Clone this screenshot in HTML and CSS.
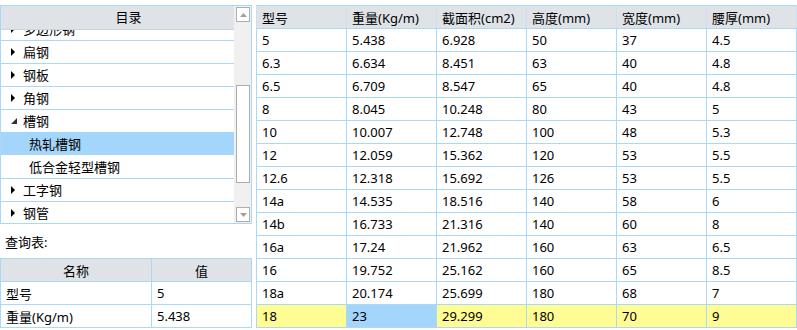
FILE: index.html
```html
<!DOCTYPE html>
<html lang="zh-CN">
<head>
    <meta charset="UTF-8">
    <title>型钢查询</title>
    <link rel="stylesheet" href="styles.css">
</head>
<body>
    <div class="left">
        <div class="tree">
            <div class="tree-main">
                <div class="tree-head">目录</div>
                <div class="tree-view">
                    <div class="tree-list">
                        <div class="node"><div class="row"><svg class="tri" width="8" height="8"><polygon points="0,0 4,4 0,8" fill="#000"/></svg>多边形钢</div></div>
                        <div class="node"><div class="row"><svg class="tri" width="8" height="8"><polygon points="0,0 4,4 0,8" fill="#000"/></svg>扁钢</div></div>
                        <div class="node"><div class="row"><svg class="tri" width="8" height="8"><polygon points="0,0 4,4 0,8" fill="#000"/></svg>钢板</div></div>
                        <div class="node"><div class="row"><svg class="tri" width="8" height="8"><polygon points="0,0 4,4 0,8" fill="#000"/></svg>角钢</div></div>
                        <div class="node">
                            <div class="row"><svg class="tri" width="8" height="8"><polygon points="6,1 6,7 0,7" fill="#333"/></svg>槽钢</div>
                            <div class="row child selected">热轧槽钢</div>
                            <div class="row child">低合金轻型槽钢</div>
                        </div>
                        <div class="node"><div class="row"><svg class="tri" width="8" height="8"><polygon points="0,0 4,4 0,8" fill="#000"/></svg>工字钢</div></div>
                        <div class="node"><div class="row"><svg class="tri" width="8" height="8"><polygon points="0,0 4,4 0,8" fill="#000"/></svg>钢管</div></div>
                    </div>
                </div>
            </div>
            <div class="scrollbar">
                <div class="sb-btn"><svg width="7" height="4"><polygon points="0,4 3.5,0 7,4" fill="#a0a0a0"/></svg></div>
                <div class="sb-track">
                    <div class="sb-thumb"></div>
                </div>
                <div class="sb-btn"><svg width="7" height="4"><polygon points="0,0 7,0 3.5,4" fill="#a0a0a0"/></svg></div>
            </div>
        </div>

        <div class="query-label">查询表:</div>

        <table class="grid query">
            <tr><th class="col-name">名称</th><th>值</th></tr>
            <tr><td>型号</td><td>5</td></tr>
            <tr><td>重量(Kg/m)</td><td>5.438</td></tr>
        </table>
    </div>

    <div class="right">
        <table class="grid data">
            <tr><th>型号</th><th>重量(Kg/m)</th><th>截面积(cm2)</th><th>高度(mm)</th><th>宽度(mm)</th><th>腰厚(mm)</th></tr>
            <tr><td>5</td><td>5.438</td><td>6.928</td><td>50</td><td>37</td><td>4.5</td></tr>
            <tr><td>6.3</td><td>6.634</td><td>8.451</td><td>63</td><td>40</td><td>4.8</td></tr>
            <tr><td>6.5</td><td>6.709</td><td>8.547</td><td>65</td><td>40</td><td>4.8</td></tr>
            <tr><td>8</td><td>8.045</td><td>10.248</td><td>80</td><td>43</td><td>5</td></tr>
            <tr><td>10</td><td>10.007</td><td>12.748</td><td>100</td><td>48</td><td>5.3</td></tr>
            <tr><td>12</td><td>12.059</td><td>15.362</td><td>120</td><td>53</td><td>5.5</td></tr>
            <tr><td>12.6</td><td>12.318</td><td>15.692</td><td>126</td><td>53</td><td>5.5</td></tr>
            <tr><td>14a</td><td>14.535</td><td>18.516</td><td>140</td><td>58</td><td>6</td></tr>
            <tr><td>14b</td><td>16.733</td><td>21.316</td><td>140</td><td>60</td><td>8</td></tr>
            <tr><td>16a</td><td>17.24</td><td>21.962</td><td>160</td><td>63</td><td>6.5</td></tr>
            <tr><td>16</td><td>19.752</td><td>25.162</td><td>160</td><td>65</td><td>8.5</td></tr>
            <tr><td>18a</td><td>20.174</td><td>25.699</td><td>180</td><td>68</td><td>7</td></tr>
            <tr class="current"><td>18</td><td class="cell-sel">23</td><td>29.299</td><td>180</td><td>70</td><td>9</td></tr>
        </table>
    </div>
</body>
</html>
```

FILE: styles.css
```css
body {
    margin: 0;
    width: 797px;
    height: 330px;
    overflow: hidden;
    display: flex;
    gap: 4px;
    background: #fff;
    font-family: "Noto Sans", "Noto Sans CJK SC", sans-serif;
    font-size: 13px;
    color: #000;
}

.left {
    width: 252px;
    padding-top: 5px;
    display: flex;
    flex-direction: column;
}

.tree {
    display: flex;
    height: 219px;
    border: 1px solid #aad8f7;
    box-sizing: border-box;
}

.tree-main {
    flex: 1;
    display: flex;
    flex-direction: column;
    min-width: 0;
}

.tree-head {
    height: 23px;
    line-height: 23px;
    background: #dfe3e8;
    padding-left: 22px;
    text-align: center;
    border-bottom: 1px solid #c9d6e2;
}

.tree-view {
    flex: 1;
    overflow: hidden;
}

/* scrolled down a little */
.tree-list {
    margin-top: -12px;
}

.node {
    border-bottom: 1px solid #aad8f7;
}

.row {
    height: 22px;
    line-height: 22px;
    padding-left: 10px;
    display: flex;
    align-items: center;
    white-space: nowrap;
}

.row .tri {
    margin-right: 4px;
    flex: none;
}

.row.child {
    padding-left: 28px;
    height: 23px;
}

.row.selected {
    background: #a3d6fa;
}

.scrollbar {
    width: 17px;
    background: #f0f0f0;
    display: flex;
    flex-direction: column;
    padding: 1px 0;
    box-sizing: border-box;
}

.sb-btn {
    height: 15px;
    margin: 0 1px 0 2px;
    background: #fff;
    border: 1px solid #adadad;
    box-sizing: border-box;
    display: flex;
    align-items: center;
    justify-content: center;
}

.sb-track {
    flex: 1;
    padding: 63px 0 24px;
}

.sb-thumb {
    height: 100%;
    margin: 0 1px 0 2px;
    background: #fff;
    border: 1px solid #adadad;
    box-sizing: border-box;
}

.query-label {
    height: 34px;
    line-height: 36px;
    padding-left: 5px;
}

.grid {
    border-collapse: collapse;
    table-layout: fixed;
}

.grid th,
.grid td {
    border: 1px solid #aad8f7;
    height: 22px;
    padding: 0 5px;
    font-weight: normal;
    text-align: left;
    white-space: nowrap;
    overflow: hidden;
}

.grid th {
    background: #dfe3e8;
}

.query {
    width: 252px;
}

.query th {
    text-align: center;
}

.query .col-name {
    width: 140px;
}

.right {
    padding-top: 5px;
}

.data {
    width: 541px;
}

.data th {
    border-color: #aad8f7 #cde0ee;
}

.data .current td {
    background: #fffc94;
}

.data .current td.cell-sel {
    background: #a3d6fa;
}
```
